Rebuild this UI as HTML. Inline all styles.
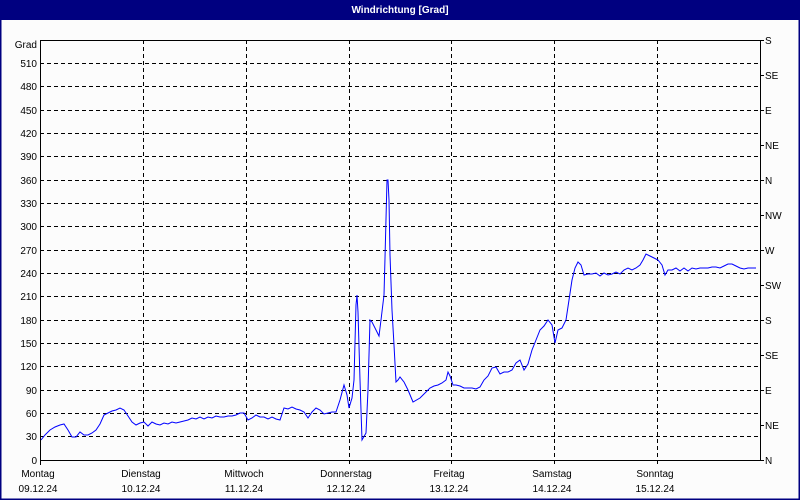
<!DOCTYPE html>
<html><head><meta charset="utf-8"><style>
html,body{margin:0;padding:0;}
body{width:800px;height:500px;overflow:hidden;background:#fcfcfc;font-family:"Liberation Sans",sans-serif;position:relative;}
</style></head><body>
<svg width="800" height="500" xmlns="http://www.w3.org/2000/svg" style="position:absolute;left:0;top:0" font-family="Liberation Sans, sans-serif" font-size="10">
<rect x="0" y="0" width="800" height="500" fill="#fcfcfc"/>
<rect x="0.5" y="0.5" width="799" height="499" fill="none" stroke="#000080" stroke-width="2"/>
<rect x="0" y="0" width="800" height="20" fill="#000080"/>
<text x="400" y="13" fill="#fff" font-weight="bold" text-anchor="middle" font-size="10">Windrichtung [Grad]</text>
<g stroke="#000" stroke-width="1" stroke-dasharray="4,3">
<line x1="40" x2="760" y1="63.5" y2="63.5"/><line x1="40" x2="760" y1="86.5" y2="86.5"/><line x1="40" x2="760" y1="110.5" y2="110.5"/><line x1="40" x2="760" y1="133.5" y2="133.5"/><line x1="40" x2="760" y1="156.5" y2="156.5"/><line x1="40" x2="760" y1="180.5" y2="180.5"/><line x1="40" x2="760" y1="203.5" y2="203.5"/><line x1="40" x2="760" y1="226.5" y2="226.5"/><line x1="40" x2="760" y1="250.5" y2="250.5"/><line x1="40" x2="760" y1="273.5" y2="273.5"/><line x1="40" x2="760" y1="296.5" y2="296.5"/><line x1="40" x2="760" y1="320.5" y2="320.5"/><line x1="40" x2="760" y1="343.5" y2="343.5"/><line x1="40" x2="760" y1="366.5" y2="366.5"/><line x1="40" x2="760" y1="390.5" y2="390.5"/><line x1="40" x2="760" y1="413.5" y2="413.5"/><line x1="40" x2="760" y1="436.5" y2="436.5"/>
<line x1="143.5" x2="143.5" y1="40" y2="465"/><line x1="246.5" x2="246.5" y1="40" y2="465"/><line x1="349.5" x2="349.5" y1="40" y2="465"/><line x1="451.5" x2="451.5" y1="40" y2="465"/><line x1="554.5" x2="554.5" y1="40" y2="465"/><line x1="657.5" x2="657.5" y1="40" y2="465"/>
</g>
<g stroke="#000" stroke-width="1">
<line x1="40.5" x2="40.5" y1="40" y2="465"/>
<line x1="40" x2="760" y1="40.5" y2="40.5"/>
<line x1="40" x2="760" y1="460.5" y2="460.5"/>
<line x1="760.5" x2="760.5" y1="40" y2="461"/>
<g>
<line x1="760" x2="764" y1="40.5" y2="40.5"/><line x1="760" x2="764" y1="75.5" y2="75.5"/><line x1="760" x2="764" y1="110.5" y2="110.5"/><line x1="760" x2="764" y1="145.5" y2="145.5"/><line x1="760" x2="764" y1="180.5" y2="180.5"/><line x1="760" x2="764" y1="215.5" y2="215.5"/><line x1="760" x2="764" y1="250.5" y2="250.5"/><line x1="760" x2="764" y1="285.5" y2="285.5"/><line x1="760" x2="764" y1="320.5" y2="320.5"/><line x1="760" x2="764" y1="355.5" y2="355.5"/><line x1="760" x2="764" y1="390.5" y2="390.5"/><line x1="760" x2="764" y1="425.5" y2="425.5"/><line x1="760" x2="764" y1="460.5" y2="460.5"/>
</g>
</g>
<g fill="#000" text-anchor="end">
<text x="37" y="48">Grad</text>
<text x="37" y="67">510</text><text x="37" y="90">480</text><text x="37" y="114">450</text><text x="37" y="137">420</text><text x="37" y="160">390</text><text x="37" y="184">360</text><text x="37" y="207">330</text><text x="37" y="230">300</text><text x="37" y="254">270</text><text x="37" y="277">240</text><text x="37" y="300">210</text><text x="37" y="324">180</text><text x="37" y="347">150</text><text x="37" y="370">120</text><text x="37" y="394">90</text><text x="37" y="417">60</text><text x="37" y="440">30</text><text x="37" y="464">0</text>
</g>
<g fill="#000">
<text x="765" y="44">S</text><text x="765" y="79">SE</text><text x="765" y="114">E</text><text x="765" y="149">NE</text><text x="765" y="184">N</text><text x="765" y="219">NW</text><text x="765" y="254">W</text><text x="765" y="289">SW</text><text x="765" y="324">S</text><text x="765" y="359">SE</text><text x="765" y="394">E</text><text x="765" y="429">NE</text><text x="765" y="464">N</text>
</g>
<g fill="#000" text-anchor="middle">
<text x="38" y="477">Montag</text><text x="38" y="492">09.12.24</text>
<text x="141" y="477">Dienstag</text><text x="141" y="492">10.12.24</text>
<text x="244" y="477">Mittwoch</text><text x="244" y="492">11.12.24</text>
<text x="346" y="477">Donnerstag</text><text x="346" y="492">12.12.24</text>
<text x="449" y="477">Freitag</text><text x="449" y="492">13.12.24</text>
<text x="552" y="477">Samstag</text><text x="552" y="492">14.12.24</text>
<text x="655" y="477">Sonntag</text><text x="655" y="492">15.12.24</text>
</g>
<polyline fill="none" stroke="#0000ff" stroke-width="1" points="41,440 45,435 50,430 55,427 60,425 64,424 68,430 72,437 76,437 80,432 84,435 88,435 92,433 96,430 100,424 104,415 108,413 112,411 116,410 120,408 124,410 128,416 132,422 136,425 140,423 144,422 148,426 152,422 156,424 160,425 164,423 168,424 172,422 176,423 180,422 184,421 188,420 192,418 196,419 200,417 204,419 208,417 212,418 216,416 220,417 224,417 228,416 232,416 236,415 240,413 244,413 248,420 252,418 256,415 260,417 264,417 268,419 272,417 276,419 280,420 284,408 288,409 292,407 296,409 300,410 304,412 308,418 312,412 316,408 320,410 324,414 328,413 332,412 336,412 340,400 344,385 347,395 349,408 352,398 354,380 356,305 357,295 358,312 360,380 362,440 366,433 368,390 370,320 372,322 376,330 379,336 381,320 384,295 385,258 387,180 388,180 389,200 390,255 392,310 394,345 396,382 398,380 400,377 404,382 408,390 413,402 420,398 426,392 430,388 434,386 438,385 442,383 446,380 448,372 450,376 453,385 456,385 460,386 464,388 468,388 472,388 476,389 480,387 484,380 488,376 492,368 496,367 500,374 504,372 508,372 512,370 516,363 520,360 524,370 528,364 532,350 536,340 540,330 544,326 548,320 552,325 555,343 558,330 562,328 566,320 569,300 572,280 575,268 578,262 581,265 584,275 588,274 592,274 596,273 600,276 604,273 608,275 612,274 616,272 620,274 624,270 628,268 632,270 636,268 640,265 643,260 646,254 650,256 654,258 658,260 662,265 665,275 668,270 672,270 676,268 680,271 684,268 688,271 692,268 696,269 700,268 704,268 708,268 712,267 716,267 720,268 724,266 728,264 732,264 736,266 740,268 744,269 748,268 752,268 756,268"/>
</svg>
</body></html>
